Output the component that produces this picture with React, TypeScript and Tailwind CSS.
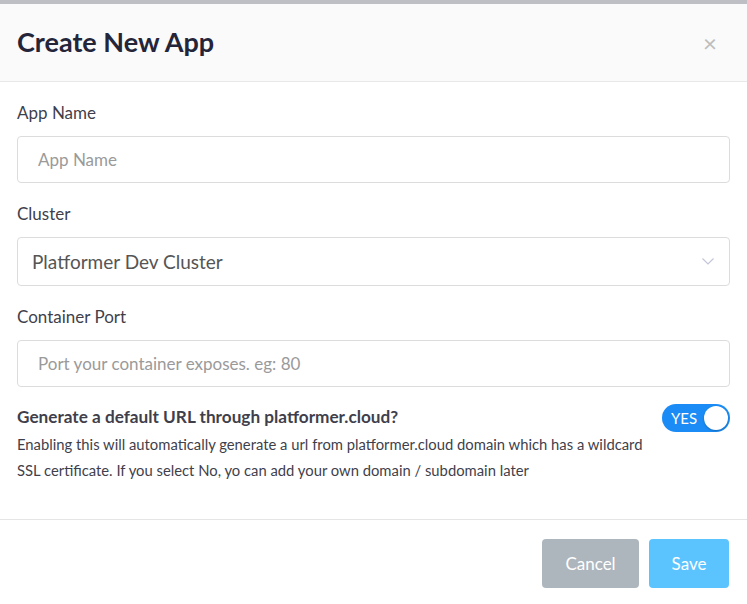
import React from "react";

const Field = ({label, children}: {label: string, children: React.ReactNode}) => (
  <div className="mb-[19px]">
    <label className="mb-[11px] block text-[17px] leading-[24px] text-[#3f3f4c]">{label}</label>
    {children}
  </div>
);

export default function App() {
  return (
    <div className="min-h-[604px] w-[747px] bg-white font-['Lato',sans-serif]">
      <div className="h-[4px] bg-[#bebec5]" />
      <div className="flex h-[78px] items-center justify-between border-b border-[#e8e8e8] bg-[#fafafa] pl-[17px] pr-[30px]">
        <h2 className="text-[27px] font-bold tracking-[0px] text-[#25253a]">Create New App</h2>
        <button className="text-[24px] leading-none text-[#bdbdbd]">×</button>
      </div>

      <div className="px-[17px] pt-[19px]">
        <Field label="App Name">
          <input
            className="h-[47px] w-full rounded-[4px] border border-[#dcdcdc] px-[20px] text-[17px] text-[#555] outline-none placeholder:text-[#9a9a9a]"
            placeholder="App Name"
            type="text" />
        </Field>
        <Field label="Cluster">
          <div className="flex h-[49px] w-full items-center justify-between rounded-[4px] border border-[#dcdcdc] pl-[14px] pr-[15px]">
            <span className="pt-[1px] text-[19px] text-[#555]">Platformer Dev Cluster</span>
            <svg width="12" height="7" viewBox="0 0 12 7" fill="none" stroke="#c3c6d8" strokeWidth="1.2">
              <path d="M0.5 0.5 L6 6 L11.5 0.5" />
            </svg>
          </div>
        </Field>
        <Field label="Container Port">
          <input
            className="h-[47px] w-full rounded-[4px] border border-[#dcdcdc] px-[20px] text-[17px] text-[#555] outline-none placeholder:text-[#9a9a9a]"
            placeholder="Port your container exposes. eg: 80"
            type="text" />
        </Field>

        <div className="-mt-[1px] flex items-start justify-between">
          <div>
            <div className="text-[17.2px] font-bold leading-[24px] text-[#3f3f4c]">Generate a default URL through platformer.cloud?</div>
            <p className="mt-[2px] text-[14.8px] leading-[26px] text-[#3f3f4c]">
              Enabling this will automatically generate a url from platformer.cloud domain which has a wildcard
              <br />
              SSL certificate. If you select No, yo can add your own domain / subdomain later
            </p>
          </div>
          <div className="mt-[-1px] flex h-[28px] w-[68px] shrink-0 items-center justify-between rounded-full bg-[#1b8cf5] pl-[9px] pr-[2px]">
            <span className="text-[15px] text-white">YES</span>
            <span className="h-[24px] w-[24px] rounded-full bg-white shadow-[0_1px_2px_rgba(0,0,0,0.25)]" />
          </div>
        </div>
      </div>

      <div className="mt-[36px] border-t border-[#e5e5e5]" />
      <div className="flex justify-end gap-[10px] px-[18px] pt-[19px]">
        <button className="h-[49px] w-[97px] rounded-[4px] bg-[#adb5bd] text-[17px] text-white">Cancel</button>
        <button className="h-[49px] w-[80px] rounded-[4px] bg-[#5bc4ff] text-[17px] text-white">Save</button>
      </div>
    </div>
  );
}
